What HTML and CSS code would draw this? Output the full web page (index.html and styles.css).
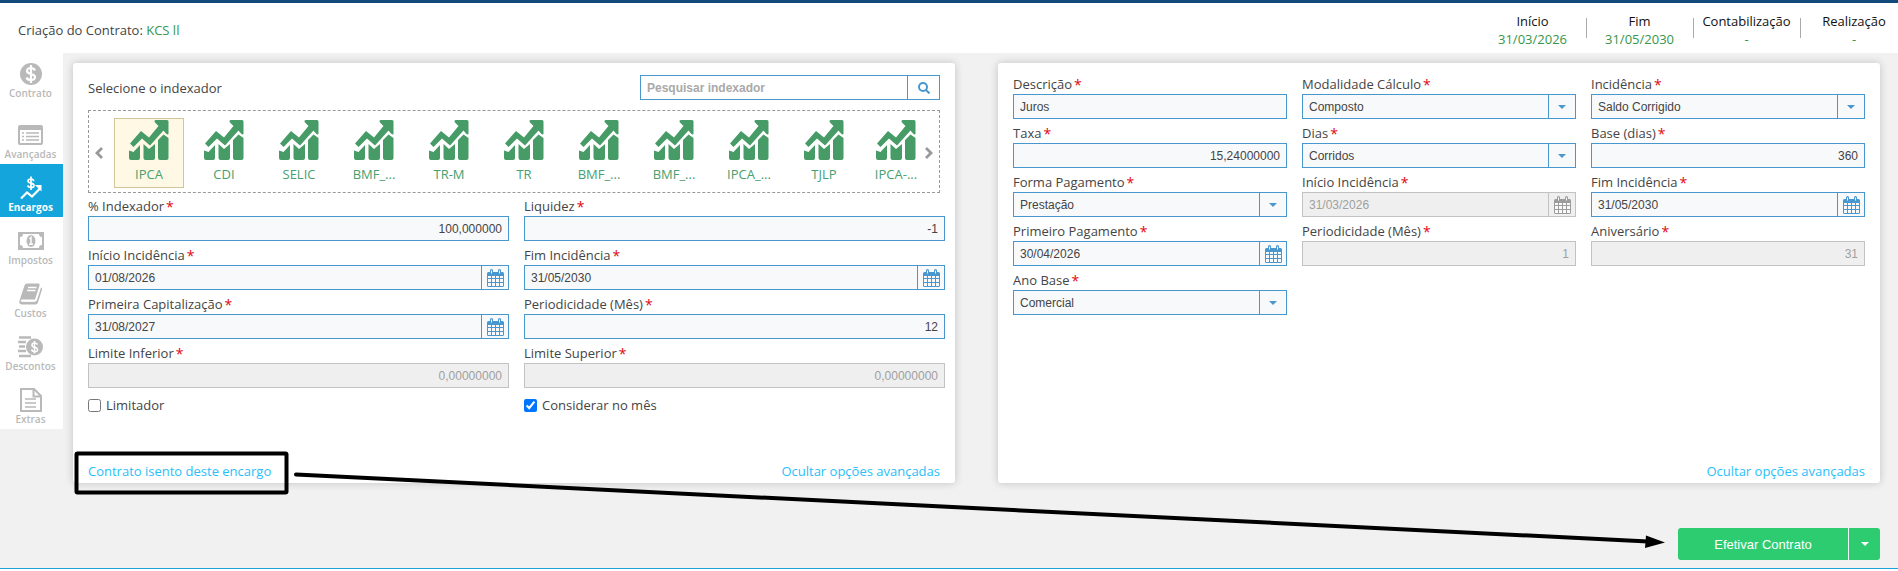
FILE: index.html
```html
<!DOCTYPE html>
<html lang="pt-BR">
<head>
<meta charset="UTF-8">
<meta name="viewport" content="width=device-width, initial-scale=1.0">
<title>Criação do Contrato</title>
<link rel="stylesheet" href="styles.css">
</head>
<body>

<!-- ícones reutilizados -->
<svg class="sprite" aria-hidden="true">
    <symbol id="i-chart" viewBox="0 0 40 40">
        <path d="M1 23.500 12 11l8 6.500 9.500-11.500-3.500-3.500Q24.500 0 27 0h11q1.500 0 1.500 1.500V14q-1 1-2.500-.5L34.500 10.500 21 25.500 13 18.500 4.500 27Z"/>
        <path d="M0 30.500 4.500 32 11 25v13q0 2-2 2H2q-2 0-2-2ZM14.500 24l5.500 5 6-5v14q0 2-2 2h-7.500q-2 0-2-2ZM29 20l5.500-5.500L39.500 18v20q0 2-2 2H31q-2 0-2-2Z"/>
    </symbol>
    <symbol id="i-calendar" viewBox="0 0 17 18">
        <path d="M1.500 3H3V1.500a1.500 1.500 0 0 1 3 0V3h5V1.500a1.500 1.500 0 0 1 3 0V3h1.500Q17 3 17 4.500v12q0 1.500-1.500 1.500h-14Q0 18 0 16.500v-12Q0 3 1.500 3Z"/>
        <path class="cell" d="M1 7h3v2H1zM5 7h3v2H5zM9 7h3v2H9zM13 7h3v2h-3zM1 10h3v3H1zM5 10h3v3H5zM9 10h3v3H9zM13 10h3v3h-3zM1 14h3v3H1zM5 14h3v3H5zM9 14h3v3H9zM13 14h3v3h-3zM4 1.500h1v3H4zM12 1.500h1v3h-1z"/>
    </symbol>
    <symbol id="i-caret" viewBox="0 0 8 4"><path d="M0 0h8L4 4z"/></symbol>
</svg>

<header class="header">
    <h1 class="title">Criação do Contrato: <span class="green">KCS ll</span></h1>
    <dl class="info">
        <div class="info-item"><dt>Início</dt><dd>31/03/2026</dd></div>
        <div class="info-item"><dt>Fim</dt><dd>31/05/2030</dd></div>
        <div class="info-item"><dt>Contabilização</dt><dd>-</dd></div>
        <div class="info-item"><dt>Realização</dt><dd>-</dd></div>
    </dl>
</header>

<div class="page">
    <nav class="sidebar">
        <a class="nav-item first" href="#">
            <svg width="22" viewBox="0 0 22 22"><circle cx="11" cy="11" r="11" fill="currentColor"/><path d="M15 7.500Q14 5 11 5 7 5 7 8q0 2 4 3t4 3q0 3-4 3-3.500 0-4.500-2.500M11 2v18" fill="none" stroke="#fff" stroke-width="2.200"/></svg>
            Contrato
        </a>
        <a class="nav-item" href="#">
            <svg width="25" viewBox="0 0 25 20"><path d="M2 0h21q2 0 2 2v16q0 2-2 2H2q-2 0-2-2V2Q0 0 2 0Zm0 5v13h21V5Z" fill="currentColor" fill-rule="evenodd"/><path d="M4 8h2m2 0h13M4 11.500h2m2 0h13M4 15h2m2 0h13" stroke="currentColor" stroke-width="1.500"/></svg>
            Avançadas
        </a>
        <a class="nav-item active" href="#">
            <svg width="22" viewBox="0 0 22 23" fill="none" stroke="currentColor"><path d="M14 4.500Q13 2.500 11 2.500 8 2.500 8 4.500q0 1.500 3 2.200t3 2.300q0 2-3 2-2.500 0-3.500-2M11 0v13.500" stroke-width="1.700"/><path d="m1 22 6-6 5 4 8-8" stroke-width="2.200"/><path d="M15 8.500h6.500v6.500Z" fill="currentColor" stroke="none"/></svg>
            Encargos
        </a>
        <a class="nav-item" href="#">
            <svg width="26" viewBox="0 0 26 18"><path d="M0 0h26v18H0Zm5 2Q5 5 2 5v8q3 0 3 3h16q0-3 3-3V5q-3 0-3-3Z" fill="currentColor" fill-rule="evenodd"/><ellipse cx="13" cy="9" rx="4.500" ry="6" fill="currentColor"/><path d="m11.500 7 1.500-1.500V12m-2 .2h4" fill="none" stroke="#fff" stroke-width="1.400"/></svg>
            Impostos
        </a>
        <a class="nav-item" href="#">
            <svg width="24" viewBox="0 0 24 21"><path d="M8 0h11q2 0 1.500 2L16 16H3q-2 0-1 2h14q1.500 0 2-1.500L22 4q1.500.5 1 2l-4 13q-.5 2-2.500 2H3q-3.500 0-2.500-4L5.500 2Q6 0 8 0Z" fill="currentColor"/><path d="M9 4h8.500M8 7h8.500M3 17.500h13" stroke="#fff" stroke-width="1.300"/></svg>
            Custos
        </a>
        <a class="nav-item" href="#">
            <svg width="25" viewBox="0 0 25 22"><path d="M1 1.500h12M0 6h8M1 10.500h6M0 15h8M1 20h12" stroke="currentColor" stroke-width="2.600"/><circle cx="16.500" cy="11" r="8.500" fill="currentColor"/><path d="M19.500 8.500Q18.500 7 16.500 7 14 7 14 9t2.500 2.200T19.500 13.500 16.500 15.500q-2.500 0-3-2M16.500 5v12.500" fill="none" stroke="#fff" stroke-width="1.500"/></svg>
            Descontos
        </a>
        <a class="nav-item" href="#">
            <svg width="22" viewBox="0 0 22 24" fill="none" stroke="currentColor"><path d="M1 1h13l7 7v15H1ZM13.500 1v7.500H21" stroke-width="2"/><path d="M5 11h11M5 15h11M5 19h11" stroke-width="1.600"/></svg>
            Extras
        </a>
    </nav>

    <main class="main">
        <div class="cards">
            <!-- indexador -->
            <section class="card">
                <div class="search-row">
                    <h2 class="subtitle">Selecione o indexador</h2>
                    <div class="box search">
                        <input type="text" aria-label="Pesquisar indexador" placeholder="Pesquisar indexador">
                        <button class="trigger" type="button" aria-label="Pesquisar"><svg width="12" height="12" viewBox="0 0 12 12" fill="none" stroke="currentColor" stroke-width="2"><circle cx="5" cy="5" r="4"/><path d="m8 8 3.500 3.500"/></svg></button>
                    </div>
                </div>

                <div class="carousel">
                    <button class="arrow" type="button" aria-label="Anterior"><svg width="8" height="12" viewBox="0 0 8 12"><path d="M7 1 2 6l5 5" fill="none" stroke="currentColor" stroke-width="2.800"/></svg></button>
                    <div class="tiles">
                        <button class="tile selected" type="button"><svg><use href="#i-chart"/></svg>IPCA</button>
                        <button class="tile" type="button"><svg><use href="#i-chart"/></svg>CDI</button>
                        <button class="tile" type="button"><svg><use href="#i-chart"/></svg>SELIC</button>
                        <button class="tile" type="button"><svg><use href="#i-chart"/></svg>BMF_...</button>
                        <button class="tile" type="button"><svg><use href="#i-chart"/></svg>TR-M</button>
                        <button class="tile" type="button"><svg><use href="#i-chart"/></svg>TR</button>
                        <button class="tile" type="button"><svg><use href="#i-chart"/></svg>BMF_...</button>
                        <button class="tile" type="button"><svg><use href="#i-chart"/></svg>BMF_...</button>
                        <button class="tile" type="button"><svg><use href="#i-chart"/></svg>IPCA_...</button>
                        <button class="tile" type="button"><svg><use href="#i-chart"/></svg>TJLP</button>
                        <button class="tile" type="button"><svg><use href="#i-chart"/></svg>IPCA-...</button>
                    </div>
                    <button class="arrow" type="button" aria-label="Próximo"><svg width="8" height="12" viewBox="0 0 8 12"><path d="m1 1 5 5-5 5" fill="none" stroke="currentColor" stroke-width="2.800"/></svg></button>
                </div>

                <div class="form two">
                    <div class="field">
                        <label for="pct">% Indexador<b>*</b></label>
                        <div class="box"><input id="pct" class="num" type="text" value="100,000000"></div>
                    </div>
                    <div class="field">
                        <label for="liquidez">Liquidez<b>*</b></label>
                        <div class="box"><input id="liquidez" class="num" type="text" value="-1"></div>
                    </div>
                    <div class="field">
                        <label for="inicio">Início Incidência<b>*</b></label>
                        <div class="box"><input id="inicio" type="text" value="01/08/2026"><button class="trigger" type="button" aria-label="Abrir calendário"><svg class="cal"><use href="#i-calendar"/></svg></button></div>
                    </div>
                    <div class="field">
                        <label for="fim">Fim Incidência<b>*</b></label>
                        <div class="box"><input id="fim" type="text" value="31/05/2030"><button class="trigger" type="button" aria-label="Abrir calendário"><svg class="cal"><use href="#i-calendar"/></svg></button></div>
                    </div>
                    <div class="field">
                        <label for="capital">Primeira Capitalização<b>*</b></label>
                        <div class="box"><input id="capital" type="text" value="31/08/2027"><button class="trigger" type="button" aria-label="Abrir calendário"><svg class="cal"><use href="#i-calendar"/></svg></button></div>
                    </div>
                    <div class="field">
                        <label for="period">Periodicidade (Mês)<b>*</b></label>
                        <div class="box"><input id="period" class="num" type="text" value="12"></div>
                    </div>
                    <div class="field">
                        <label for="lim-inf">Limite Inferior<b>*</b></label>
                        <div class="box disabled"><input id="lim-inf" class="num" type="text" value="0,00000000" disabled></div>
                    </div>
                    <div class="field">
                        <label for="lim-sup">Limite Superior<b>*</b></label>
                        <div class="box disabled"><input id="lim-sup" class="num" type="text" value="0,00000000" disabled></div>
                    </div>
                    <label class="check"><input type="checkbox">Limitador</label>
                    <label class="check"><input type="checkbox" checked>Considerar no mês</label>
                </div>

                <div class="links">
                    <a href="#">Contrato isento deste encargo</a>
                    <a href="#">Ocultar opções avançadas</a>
                </div>
            </section>

            <!-- juros -->
            <section class="card">
                <div class="form three">
                    <div class="field">
                        <label for="descricao">Descrição<b>*</b></label>
                        <div class="box"><input id="descricao" type="text" value="Juros"></div>
                    </div>
                    <div class="field">
                        <label for="modalidade">Modalidade Cálculo<b>*</b></label>
                        <div class="box"><select id="modalidade"><option>Composto</option></select><span class="trigger"><svg class="caret"><use href="#i-caret"/></svg></span></div>
                    </div>
                    <div class="field">
                        <label for="incidencia">Incidência<b>*</b></label>
                        <div class="box"><select id="incidencia"><option>Saldo Corrigido</option></select><span class="trigger"><svg class="caret"><use href="#i-caret"/></svg></span></div>
                    </div>
                    <div class="field">
                        <label for="taxa">Taxa<b>*</b></label>
                        <div class="box"><input id="taxa" class="num" type="text" value="15,24000000"></div>
                    </div>
                    <div class="field">
                        <label for="dias">Dias<b>*</b></label>
                        <div class="box"><select id="dias"><option>Corridos</option></select><span class="trigger"><svg class="caret"><use href="#i-caret"/></svg></span></div>
                    </div>
                    <div class="field">
                        <label for="base">Base (dias)<b>*</b></label>
                        <div class="box"><input id="base" class="num" type="text" value="360"></div>
                    </div>
                    <div class="field">
                        <label for="forma">Forma Pagamento<b>*</b></label>
                        <div class="box"><select id="forma"><option>Prestação</option></select><span class="trigger"><svg class="caret"><use href="#i-caret"/></svg></span></div>
                    </div>
                    <div class="field">
                        <label for="inicio2">Início Incidência<b>*</b></label>
                        <div class="box disabled"><input id="inicio2" type="text" value="31/03/2026" disabled><button class="trigger" type="button" aria-label="Abrir calendário" disabled><svg class="cal"><use href="#i-calendar"/></svg></button></div>
                    </div>
                    <div class="field">
                        <label for="fim2">Fim Incidência<b>*</b></label>
                        <div class="box"><input id="fim2" type="text" value="31/05/2030"><button class="trigger" type="button" aria-label="Abrir calendário"><svg class="cal"><use href="#i-calendar"/></svg></button></div>
                    </div>
                    <div class="field">
                        <label for="primeiro">Primeiro Pagamento<b>*</b></label>
                        <div class="box"><input id="primeiro" type="text" value="30/04/2026"><button class="trigger" type="button" aria-label="Abrir calendário"><svg class="cal"><use href="#i-calendar"/></svg></button></div>
                    </div>
                    <div class="field">
                        <label for="period2">Periodicidade (Mês)<b>*</b></label>
                        <div class="box disabled"><input id="period2" class="num" type="text" value="1" disabled></div>
                    </div>
                    <div class="field">
                        <label for="aniversario">Aniversário<b>*</b></label>
                        <div class="box disabled"><input id="aniversario" class="num" type="text" value="31" disabled></div>
                    </div>
                    <div class="field">
                        <label for="ano">Ano Base<b>*</b></label>
                        <div class="box"><select id="ano"><option>Comercial</option></select><span class="trigger"><svg class="caret"><use href="#i-caret"/></svg></span></div>
                    </div>
                </div>
                <div class="links right">
                    <a href="#">Ocultar opções avançadas</a>
                </div>
            </section>
        </div>

        <div class="actions">
            <button class="btn" type="button">Efetivar Contrato</button>
            <button class="btn btn-more" type="button" aria-label="Mais opções"><svg class="caret"><use href="#i-caret"/></svg></button>
        </div>
    </main>
</div>

<!-- marcação do link até o botão -->
<svg class="callout" width="1898" height="571" viewBox="0 0 1898 571" aria-hidden="true">
    <rect x="76.500" y="453.500" width="210" height="39" rx="1" fill="none" stroke="#000" stroke-width="4"/>
    <path d="M296 474.500 1648 541.500" stroke="#000" stroke-width="4" stroke-linecap="round"/>
    <path d="m1646 535.500 19 7-20 5.500Z"/>
</svg>

</body>
</html>
```
FILE: styles.css
```css
* {
    box-sizing: border-box;
}
body {
    margin: 0;
    position: relative;
    background-color: #fff;
    color: #444;
    font-family: "Open Sans", "Noto Sans", sans-serif;
    font-size: 13px;
    line-height: 18px;
}
a {
    color: #29c0f9;
    text-decoration: none;
}
button, input, select {
    margin: 0;
    font-family: Arial, "Liberation Sans", sans-serif;
    font-size: 12px;
}
button {
    padding: 0;
    border: none;
    background: none;
    cursor: pointer;
}
.sprite {
    display: none;
}

/* topo */
.header {
    display: flex;
    justify-content: space-between;
    align-items: center;
    height: 53px;
    padding: 4px 0 0 18px;
    border-top: 3px solid #124a7b;
}
.title, .subtitle {
    margin: 0;
    font-size: 13px;
    font-weight: normal;
}
.green {
    color: #37964b;
}
.info {
    display: flex;
    margin: 0;
}
.info-item {
    position: relative;
    width: 107px;
    text-align: center;
}
.info-item:last-child {
    width: 98px;
    padding-left: 10px;
}
.info-item + .info-item::before {
    content: "";
    position: absolute;
    left: 0;
    top: 6px;
    height: 20px;
    border-left: 1px solid #aaa;
}
.info dt {
    color: #111;
}
.info dd {
    margin: 0;
    color: #37964b;
}

/* menu lateral */
.page {
    display: flex;
    align-items: flex-start;
    background-color: #f1f1f1;
    border-bottom: 1px solid #1ba3dc;
}
.sidebar {
    width: 63px;
    background-color: #fff;
}
.nav-item {
    display: flex;
    flex-direction: column;
    align-items: center;
    justify-content: flex-end;
    height: 53px;
    padding: 0 2px 3px 0;
    color: #b9b9b9;
    font-size: 10px;
    font-weight: 600;
    line-height: 14px;
}
.nav-item svg {
    height: 24px;
}
.nav-item.first {
    height: 50px;
    margin-bottom: 8px;
}
.nav-item.active {
    background-color: #13a5dc;
    color: #fff;
    font-weight: bold;
}

/* cartões */
.main {
    flex: 1;
    min-width: 0;
    padding: 10px 18px 8px 10px;
}
.cards {
    display: grid;
    grid-template-columns: repeat(2, minmax(0, 1fr));
    gap: 43px;
}
.card {
    display: flex;
    flex-direction: column;
    padding: 8px 15px 3px;
    background-color: #fff;
    border-radius: 3px;
    box-shadow: 0 0 8px rgba(0, 0, 0, 0.2);
}
.search-row {
    display: flex;
    justify-content: space-between;
    align-items: center;
    padding-top: 4px;
}
.search {
    width: 300px;
}
.box.search, .search input {
    background-color: #fff;
}
.search input::placeholder {
    color: #a9a9a9;
    font-weight: bold;
}
.carousel {
    display: flex;
    align-items: center;
    justify-content: space-between;
    margin-top: 10px;
    padding: 7px 6px 4px;
    border: 1px dashed #999;
}
.arrow {
    display: flex;
    color: #999;
}
.tiles {
    display: flex;
    flex: 1;
    gap: 5px;
    margin: 0 2px 0 11px;
    overflow: hidden;
}
.tile {
    display: flex;
    flex: none;
    flex-direction: column;
    align-items: center;
    gap: 5px;
    width: 70px;
    height: 70px;
    padding-top: 1px;
    border: 1px solid transparent;
    color: #46a070;
    font-family: "Open Sans", "Noto Sans", sans-serif;
    font-size: 13px;
    line-height: 18px;
}
/* o último fica mais estreito, encostado na seta */
.tile:last-child {
    width: 64px;
}
.tile svg {
    width: 40px;
    height: 40px;
    fill: #469b67;
}
.tile.selected {
    background-color: #fef8e4;
    border-color: #d3c597;
}

/* formulário */
.form {
    display: grid;
    gap: 1px 15px;
}
.two {
    grid-template-columns: 1fr 1fr;
    margin-right: -5px;
}
.three {
    grid-template-columns: 1fr 1fr 1fr;
}
.field {
    min-width: 0;
}
.field label {
    display: block;
    height: 23px;
    padding-top: 4px;
}
.field b {
    margin-left: 2px;
    color: #e30613;
    font-size: 14px;
    font-weight: normal;
    line-height: 1;
    vertical-align: -1px;
}
.box {
    display: flex;
    height: 25px;
    background-color: #f8f9fb;
    border: 1px solid #4897cf;
    color: #4897cf;
}
.box input, .box select {
    flex: 1;
    min-width: 0;
    padding: 0 6px;
    border: none;
    background: none;
    color: #444;
    outline: none;
}
.box select {
    appearance: none;
}
.box .num {
    text-align: right;
}
.trigger {
    display: flex;
    align-items: center;
    justify-content: center;
    width: 27px;
    border-left: 1px solid #4897cf;
    color: #4897cf;
}
.search .trigger {
    width: 32px;
}
.box.disabled {
    background-color: #efefef;
    border-color: #c2c2c2;
}
.box.disabled input {
    color: #a0a0a0;
}
.disabled .trigger {
    border-color: #c2c2c2;
    color: #9c9c9c;
}
.cal {
    width: 17px;
    height: 18px;
    fill: currentColor;
}
.cell {
    fill: #f8f9fb;
}
.caret {
    width: 8px;
    height: 4px;
    fill: currentColor;
}
.check {
    display: flex;
    align-items: center;
    gap: 5px;
    padding-top: 7px;
}
.check input {
    width: 13px;
    height: 13px;
}
.links {
    display: flex;
    justify-content: space-between;
    margin-top: auto;
    padding-top: 48px;
}
.links.right {
    justify-content: flex-end;
}

/* ações */
.actions {
    display: flex;
    justify-content: flex-end;
    gap: 1px;
    margin-top: 45px;
}
.btn {
    width: 170px;
    height: 32px;
    background-color: #2ecc71;
    border-radius: 3px 0 0 3px;
    color: #fff;
    font-size: 13px;
}
.btn-more {
    display: flex;
    align-items: center;
    justify-content: center;
    width: 31px;
    border-radius: 0 3px 3px 0;
}

.callout {
    position: absolute;
    top: 0;
    left: 0;
    pointer-events: none;
}
```
